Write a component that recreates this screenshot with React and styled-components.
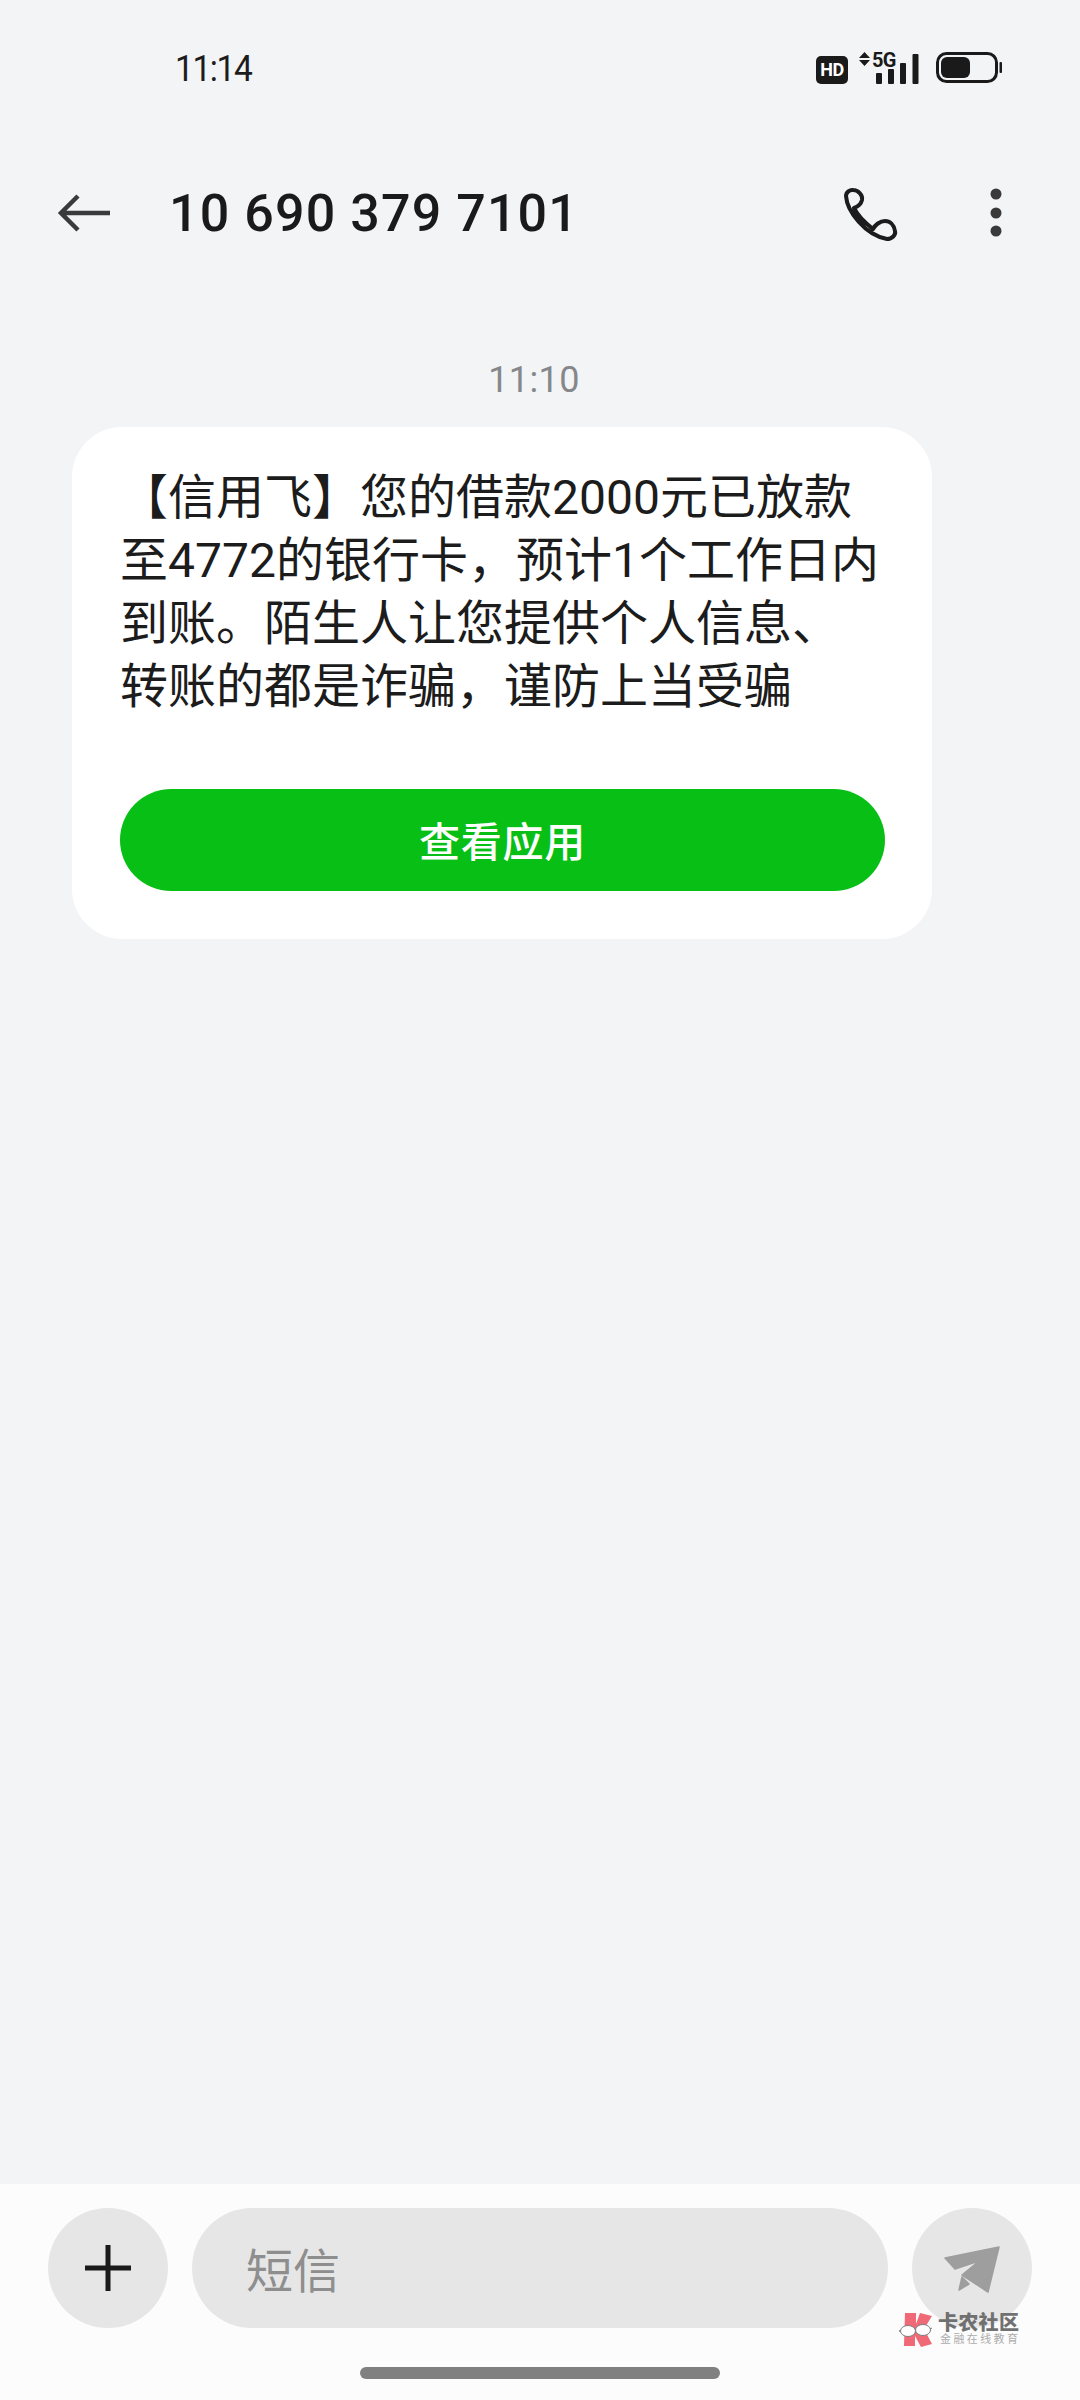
import React from "react";
import styled, { createGlobalStyle } from "styled-components";

const Global = createGlobalStyle`
  html, body { margin: 0; padding: 0; background: #f3f4f6; }
  * { box-sizing: border-box; }
`;
const CJK = `Roboto, "Noto Sans CJK SC", sans-serif`;

const Screen = styled.div`
  position: relative; width: 1080px; height: 2400px; display: flex; flex-direction: column;
  background: #f3f4f6; font-family: ${CJK}; overflow: hidden;
`;
const StatusBar = styled.div`
  height: 136px; flex: none; display: flex; align-items: center; justify-content: space-between;
  padding: 0 78px 0 175px;
`;
const Clock = styled.span`
  display: block; font-size: 36px; font-weight: 400; color: #1c1c1c; letter-spacing: -1.5px;
  transform: translateY(1px) scaleX(.93); transform-origin: left center;
`;
const StatusIcons = styled.div`
  display: flex; align-items: flex-end; height: 32px;
`;
const HdBadge = styled.div`
  width: 32px; height: 28px; border-radius: 5px; background: #1a1a1a; color: #fff; display: flex;
  align-items: center; justify-content: center; font-size: 18px; line-height: 1; font-weight: 700; letter-spacing: -.5px;
`;
const Network = styled.div`
  position: relative; width: 60px; height: 32px; margin-left: 11px;
`;
const FiveG = styled.span`
  position: absolute; left: 13px; top: -2px; font-size: 20px; line-height: 20px; font-weight: 700; color: #1a1a1a;
  letter-spacing: -.6px;
`;
const Battery = styled.svg`
  display: block; margin-left: 17px; flex: none;
`;
const Header = styled.header`
  height: 154px; flex: none; display: flex; align-items: center; padding: 0 78px 0 54px;
`;
const Title = styled.h1`
  margin: 0 0 0 59px; flex: 1; font-size: 52px; font-weight: 500; color: #1a1a1a; letter-spacing: 1.1px; white-space: nowrap;
`;
const IconSlot = styled.svg`
  display: block; flex: none;
`;
const MoreIcon = styled(IconSlot)`
  margin-left: 90px;
`;
const Thread = styled.main`
  flex: 1; padding: 68px 148px 0 72px; display: flex; flex-direction: column;
`;
const Stamp = styled.div`
  height: 44px; line-height: 44px; margin-bottom: 25px; padding-left: 64px; text-align: center; width: 860px;
  font-size: 36px; color: #85878a; white-space: nowrap; letter-spacing: .4px;
`;
const Bubble = styled.section`
  width: 860px; height: 512px; background: #fff; border-radius: 50px; padding: 39px 48px 0;
  display: flex; flex-direction: column;
`;
const Message = styled.div`
  height: 252px; margin-bottom: 71px; font-size: 48px; line-height: 63px; color: #1c1c1c; white-space: nowrap;
`;
const Line = styled.div``;
const Action = styled.div`
  width: 765px; height: 102px; padding-bottom: 3px; border-radius: 51px; background: #08bf16; color: #fff;
  display: flex; align-items: center; justify-content: center; font-size: 41px; font-weight: 500; letter-spacing: .8px;
`;
const Composer = styled.footer`
  height: 216px; flex: none; background: #fcfcfc; padding: 24px 48px 0; display: flex; align-items: flex-start; gap: 24px;
`;
const Round = styled.div`
  width: 120px; height: 120px; flex: none; border-radius: 50%; background: #e6e6e6;
  display: flex; align-items: center; justify-content: center;
`;
const Field = styled.div`
  width: 696px; height: 120px; flex: none; border-radius: 60px; background: #e6e6e6; padding: 0 0 2px 54px;
  display: flex; align-items: center; font-size: 47px; color: #8e8e8e;
`;
const HomeBar = styled.div`
  position: absolute; left: 360px; bottom: 21px; width: 360px; height: 12px; border-radius: 6px; background: #808080;
`;
const Watermark = styled.div`
  position: absolute; left: 899px; top: 2312px; display: flex; align-items: center; gap: 5px; opacity: .95;
`;
const MarkText = styled.div`
  display: flex; flex-direction: column; align-items: flex-start;
`;
const MarkName = styled.span`
  font-size: 20px; line-height: 20px; font-weight: 900; color: #6a6a6a; letter-spacing: .3px; white-space: nowrap;
`;
const MarkSub = styled.span`
  font-size: 11px; line-height: 14px; color: #a8a8a8; letter-spacing: 2.4px; margin-left: 2px; white-space: nowrap;
`;

const NetworkGlyphs = () => (
  <IconSlot width="60" height="32" viewBox="0 0 60 32">
    <path d="M0 6l5.500-6 5.500 6zM0 8h11l-5.500 6z" fill="#1a1a1a" />
    <rect x="17" y="21" width="6" height="11" fill="#1a1a1a" rx="1" />
    <rect x="29" y="17" width="6" height="15" fill="#1a1a1a" rx="1" />
    <rect x="41" y="11" width="6" height="21" fill="#1a1a1a" rx="1" />
    <rect x="53.500" y="2" width="6" height="30" fill="#1a1a1a" rx="1" />
  </IconSlot>
);
const BatteryIcon = () => (
  <Battery width="66" height="32" viewBox="0 0 66 32">
    <rect x="1.500" y="1.500" width="59" height="28" rx="9" fill="none" stroke="#1a1a1a" strokeWidth="3" />
    <rect x="5" y="5" width="29" height="21" rx="6" fill="#1a1a1a" />
    <rect x="63.500" y="10" width="2.500" height="11" rx="1" fill="#1a1a1a" />
  </Battery>
);
const Back = () => (
  <IconSlot width="56" height="44" viewBox="0 0 56 44">
    <path d="M56 22H8M24 5L7 22l17 17" fill="none" stroke="#3a3a3a" strokeWidth="4.500" />
  </IconSlot>
);
const Phone = () => (
  <IconSlot width="60" height="60" viewBox="0 0 60 60">
    <path
      d="M6 13C6 9 10 6.500 13 7C18 7 23 12 22 17C21 21 17 24 14 25M6 13C7 28 25 52 47 56C52 56 56 52 55 48C54 42 50 38 45 38C40 38 35 42 33 46M14 25C18 33 25 40 33 46"
      fill="none" stroke="#1c1c1c" strokeWidth="4" strokeLinecap="round"
    />
  </IconSlot>
);
const More = () => (
  <MoreIcon width="12" height="50" viewBox="0 0 12 50">
    <circle cx="6" cy="6" r="5.500" fill="#3a3a3a" />
    <circle cx="6" cy="25" r="5.500" fill="#3a3a3a" />
    <circle cx="6" cy="43" r="5.500" fill="#3a3a3a" />
  </MoreIcon>
);
const Plus = () => (
  <IconSlot width="46" height="46" viewBox="0 0 46 46">
    <path d="M0 23H46M23 0V46" stroke="#1a1a1a" strokeWidth="5" />
  </IconSlot>
);
const Send = () => (
  <IconSlot width="120" height="120" viewBox="0 0 120 120">
    <path d="M33 50L87 39L76 84L50 67L67 53L43 61Z" fill="#9e9e9e" stroke="#9e9e9e" strokeWidth="1.500" strokeLinejoin="round" />
    <path d="M50 69L57 76L47 82Z" fill="#9e9e9e" stroke="#9e9e9e" strokeWidth="1.500" strokeLinejoin="round" />
  </IconSlot>
);
const Logo = () => (
  <IconSlot width="34" height="36" viewBox="0 0 34 36">
    <path d="M6 1h11v11l4-11l12 3l-8 13l8 15l-11 3l-6-11v10H5z" fill="#ef6270" />
    <ellipse cx="9" cy="19" rx="7.500" ry="5.500" fill="#fff" stroke="#777" strokeWidth="1" />
    <ellipse cx="24" cy="18" rx="7.500" ry="5.500" fill="#fff" stroke="#777" strokeWidth="1" />
    <path d="M1 18l-1 2M31 17l2-1" stroke="#777" strokeWidth="1" />
  </IconSlot>
);

export default function App() {
  return (
    <Screen>
      <Global />
      <StatusBar>
        <Clock>11:14</Clock>
        <StatusIcons>
          <HdBadge>HD</HdBadge>
          <Network>
            <NetworkGlyphs />
            <FiveG>5G</FiveG>
          </Network>
          <BatteryIcon />
        </StatusIcons>
      </StatusBar>
      <Header>
        <Back />
        <Title>10 690 379 7101</Title>
        <Phone />
        <More />
      </Header>
      <Thread>
        <Stamp>11:10</Stamp>
        <Bubble>
          <Message>
            <Line>【信用飞】您的借款2000元已放款</Line>
            <Line>至4772的银行卡，预计1个工作日内</Line>
            <Line>到账。陌生人让您提供个人信息、</Line>
            <Line>转账的都是诈骗，谨防上当受骗</Line>
          </Message>
          <Action>查看应用</Action>
        </Bubble>
      </Thread>
      <Composer>
        <Round><Plus /></Round>
        <Field>短信</Field>
        <Round><Send /></Round>
      </Composer>
      <HomeBar />
      <Watermark>
        <Logo />
        <MarkText>
          <MarkName>卡农社区</MarkName>
          <MarkSub>金融在线教育</MarkSub>
        </MarkText>
      </Watermark>
    </Screen>
  );
}
